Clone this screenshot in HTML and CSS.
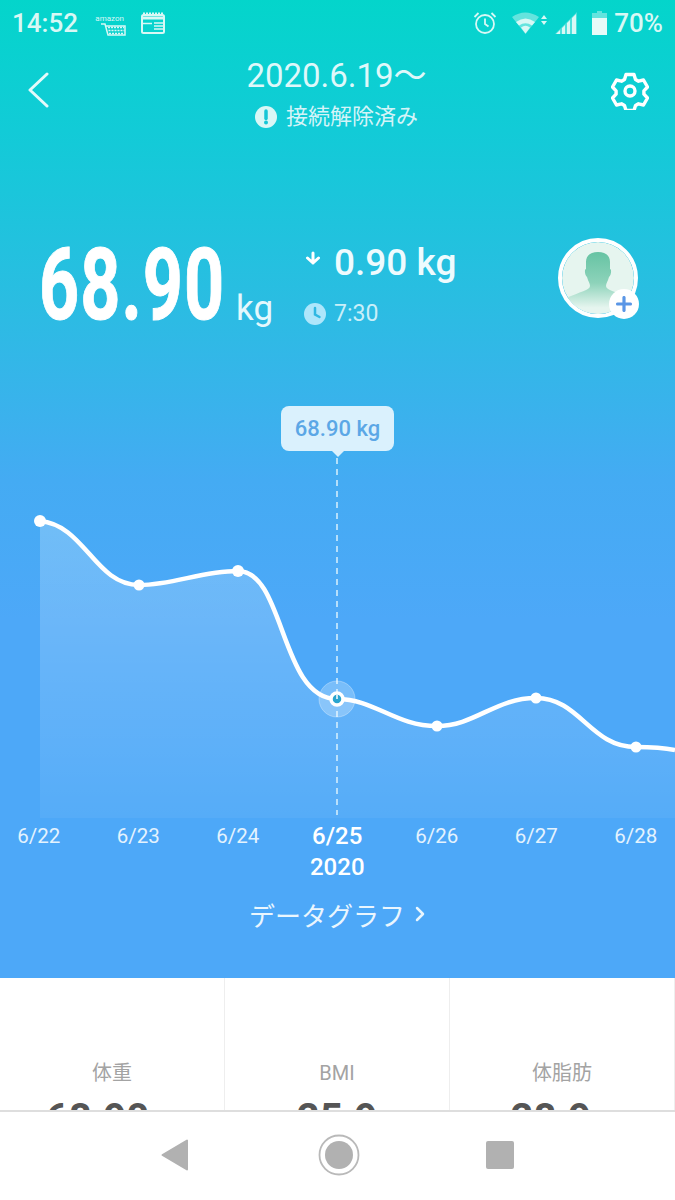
FILE: index.html
```html
<!DOCTYPE html>
<html lang="ja">

<head>
  <title>体重</title>
  <link rel="stylesheet" href="styles.css">
</head>

<body>
  <div class="phone">
    <div class="hero">
      <div class="statusbar">
        <div class="status-left">
          <span class="clock-text">14:52</span>
          <span class="amazon">
            <span class="amazon-word">amazon</span>
            <svg width="26" height="13" viewBox="0 0 26 13">
              <path d="M1 1h4l3 11h17V3H6" fill="none" stroke="#d8f8f5" stroke-width="1.5" />
              <path d="M8 4.500h16M8.500 7.500h16M9 10.500h15" stroke="#d8f8f5" stroke-width="1.500" stroke-dasharray="2 1" />
            </svg>
          </span>
          <svg class="news" width="24" height="22" viewBox="0 0 24 22">
            <rect x="1" y="3" width="22" height="18" rx="1.500" fill="none" stroke="#d8f8f5" stroke-width="2" />
            <path d="M1 6h22" stroke="#d8f8f5" stroke-width="3" />
            <path d="M2 1.500h20" stroke="#d8f8f5" stroke-width="2" stroke-dasharray="2 1" />
            <path d="M13 11h9M13 14h9M13 17h9M2 11.500h9" stroke="#d8f8f5" stroke-width="1.500" />
          </svg>
        </div>
        <div class="status-right">
          <svg width="24" height="24" viewBox="0 0 24 24" fill="none" stroke="#d8f8f5" stroke-width="1.800">
            <circle cx="12" cy="13" r="9" />
            <path d="M12 7.500V13l3.500 2.500M1.500 6l4-4M22.500 6l-4-4" />
          </svg>
          <svg class="wifi" width="35" height="24" viewBox="0 0 35 24">
            <path d="M0 6Q13-3 27 6l-13.500 17z" fill="#d8f8f5" fill-opacity=".45" />
            <path d="M4 11Q13.500 4 23 11l-3 3.500Q13.500 10 7 14.500z M9 16.500Q13.500 13 18 16.500l-4.500 6z" fill="#d8f8f5" />
            <path d="M29 8l3-4 3 4zM29 10l3 4 3-4z" fill="#d8f8f5" />
          </svg>
          <svg class="signal" width="22" height="24" viewBox="0 0 22 24">
            <path d="M0 23L22 1v22z" fill="#d8f8f5" fill-opacity=".35" />
            <path d="M1 23l4-4v4zM7 23v-6l3-3v9zM12 23V12l3-3v14zM17 23V7l4-4v20z" fill="#d8f8f5" />
          </svg>
          <svg class="battery" width="15" height="24" viewBox="0 0 15 24">
            <path d="M5 0h5v2h5v5H0V2h5z" fill="#d8f8f5" fill-opacity=".45" />
            <path d="M0 7h15v17H0z" fill="#e6fbf8" />
          </svg>
          <span class="battery-text">70%</span>
        </div>
      </div>

      <div class="topbar">
        <svg class="back" width="24" height="36" viewBox="0 0 24 36" fill="none" stroke="#e4fafa" stroke-width="3" stroke-linecap="round" stroke-linejoin="round">
          <path d="M21 2L4 18l17 16" />
        </svg>
        <div class="title-box">
          <div class="title">2020.6.19〜</div>
          <div class="conn">
            <svg width="22" height="22" viewBox="0 0 22 22">
              <circle cx="11" cy="11" r="11" fill="#d8f7f6" />
              <path d="M11 5v7.500" stroke="#15c6d6" stroke-width="3.500" stroke-linecap="round" />
              <circle cx="11" cy="16.500" r="2" fill="#15c6d6" />
            </svg>
            <span>接続解除済み</span>
          </div>
        </div>
        <svg class="gear" width="38" height="38" viewBox="0 0 38 38" fill="none" stroke="#fff" stroke-width="3.400" stroke-linejoin="round">
          <path d="M15 2.500h8l1.500 5 3 1.700 5-1.200 4 7-3.600 3.800v3.400l3.600 3.800-4 7-5-1.200-3 1.700-1.500 5h-8l-1.500-5-3-1.700-5 1.200-4-7 3.600-3.800v-3.400L1.500 15l4-7 5 1.200 3-1.700z" />
          <circle cx="19" cy="19" r="5" />
        </svg>
      </div>

      <div class="summary">
        <div class="big-value">68.90</div>
        <div class="big-unit">kg</div>
        <div class="delta">
          <div class="delta-row">
            <svg width="16" height="14" viewBox="0 0 16 14" fill="none" stroke="#fff" stroke-width="3" stroke-linecap="round" stroke-linejoin="round">
              <path d="M8 2v10M2.500 7L8 12l5.500-5" />
            </svg>
            <span class="delta-num">0.90 kg</span>
          </div>
          <div class="time-row">
            <svg width="22" height="22" viewBox="0 0 22 22">
              <circle cx="11" cy="11" r="11" fill="#aee6fb" />
              <path d="M11 5v6.500l4.500 2.500" fill="none" stroke="#2fb8e2" stroke-width="2.500" stroke-linecap="round" />
            </svg>
            <span>7:30</span>
          </div>
        </div>
        <div class="avatar">
          <svg width="72" height="72" viewBox="0 0 72 72">
            <defs>
              <linearGradient id="person" x1="0" y1="0" x2="0" y2="1">
                <stop offset="0" stop-color="#66c3a3" />
                <stop offset=".5" stop-color="#8dd3ba" />
                <stop offset=".9" stop-color="#e6f5ef" />
              </linearGradient>
            </defs>
            <circle cx="36" cy="36" r="36" fill="#e6f5ef" />
            <path d="M24 20c0-7 5-10 12-10s12 3 12 10v7c2 0 1 7-1 8-1 4-3 6-3 9 0 4 10 6 24 12v16H4V56c14-6 24-8 24-12 0-3-2-5-3-9-2-1-3-8-1-8z" fill="url(#person)" />
          </svg>
          <span class="avatar-plus">
            <svg width="16" height="16" viewBox="0 0 16 16">
              <path d="M8 1.500v13M1.500 8h13" stroke="#5a96e6" stroke-width="3.200" stroke-linecap="round" />
            </svg>
          </span>
        </div>
      </div>

      <div class="chart">
        <svg class="chart-svg" width="675" height="420" viewBox="0 400 675 420">
          <defs>
            <linearGradient id="area" x1="0" y1="0" x2="0" y2="1">
              <stop offset="0" stop-color="#fff" stop-opacity=".23" />
              <stop offset="1" stop-color="#fff" stop-opacity=".05" />
            </linearGradient>
          </defs>
          <path d="M40 521C85 525 95 585 139 585C175 585 200 571 238 571C285 571 280 699 337 699C375 699 395 726 437 726C475 726 495 698 536 698C580 698 590 747 636 747C650 747 665 748 675 750V818H40z" fill="url(#area)" />
          <path d="M337 458V815" stroke="#d9f1fd" stroke-width="1.500" stroke-dasharray="6 5" />
          <path d="M40 521C85 525 95 585 139 585C175 585 200 571 238 571C285 571 280 699 337 699C375 699 395 726 437 726C475 726 495 698 536 698C580 698 590 747 636 747C650 747 665 748 675 750" fill="none" stroke="#fff" stroke-width="4.500" />
          <g fill="#fff">
            <circle cx="40" cy="521" r="6" />
            <circle cx="139" cy="585" r="5.500" />
            <circle cx="238" cy="571" r="6" />
            <circle cx="437" cy="726" r="5.500" />
            <circle cx="536" cy="698" r="5.500" />
            <circle cx="636" cy="747" r="5.500" />
          </g>
          <circle cx="337" cy="699" r="18" fill="#fff" fill-opacity=".25" stroke="#fff" stroke-opacity=".3" />
          <circle cx="337" cy="699" r="6" fill="#2aa5cf" stroke="#fff" stroke-width="3.500" />
          <path d="M337 695v4" stroke="#fff" stroke-width="1.500" />
        </svg>
        <div class="tip">68.90 kg</div>
      </div>

      <div class="axis">
        <div class="tick">6/22</div>
        <div class="tick">6/23</div>
        <div class="tick">6/24</div>
        <div class="tick active">6/25<div class="year">2020</div></div>
        <div class="tick">6/26</div>
        <div class="tick">6/27</div>
        <div class="tick">6/28</div>
      </div>

      <div class="graph-link">データグラフ
        <svg width="11" height="16" viewBox="0 0 11 16" fill="none" stroke="#eaf6fe" stroke-width="2.500" stroke-linecap="round" stroke-linejoin="round">
          <path d="M2 2l6 6-6 6" />
        </svg>
      </div>
    </div>

    <div class="stats">
      <div class="stat">
        <div class="stat-label">体重</div>
        <div class="stat-value">68.90<span class="stat-unit">kg</span></div>
      </div>
      <div class="stat">
        <div class="stat-label">BMI</div>
        <div class="stat-value">25.9</div>
      </div>
      <div class="stat">
        <div class="stat-label">体脂肪</div>
        <div class="stat-value">28.9<span class="stat-unit">%</span></div>
      </div>
    </div>

    <div class="navbar">
      <svg class="nav-back" width="28" height="32" viewBox="0 0 28 32">
        <path d="M26 1.500v29L1.500 16z" fill="#b1b1b1" stroke="#b1b1b1" stroke-width="2" stroke-linejoin="round" />
      </svg>
      <svg width="42" height="42" viewBox="0 0 42 42">
        <circle cx="21" cy="21" r="19.500" fill="none" stroke="#b9b9b9" stroke-width="1.800" />
        <circle cx="21" cy="21" r="14" fill="#b1b1b1" />
      </svg>
      <svg width="28" height="28" viewBox="0 0 28 28">
        <rect width="28" height="28" rx="2" fill="#b1b1b1" />
      </svg>
    </div>
  </div>
</body>

</html>
```

FILE: styles.css
```css
* {
  box-sizing: border-box;
}

body {
  margin: 0;
  font-family: Roboto, "Noto Sans CJK JP", sans-serif;
  overflow: hidden;
}

.phone {
  position: relative;
  width: 675px;
  height: 1200px;
  overflow: hidden;
  background: #fff;
}

.hero {
  height: 978px;
  background: linear-gradient(#04d5cb 0, #12cbd7 130px, #2abde2 300px, #44abf3 480px, #4da8f8 620px, #4da8f8 100%);
}

.statusbar {
  display: flex;
  justify-content: space-between;
  align-items: center;
  height: 46px;
  padding: 0 12px;
  color: #d8f8f5;
}

.status-left,
.status-right {
  display: flex;
  align-items: center;
}

.clock-text {
  font-size: 26px;
  font-weight: 500;
  margin-right: 22px;
}

.amazon {
  display: flex;
  flex-direction: column;
  align-items: flex-end;
  width: 26px;
  margin-right: 15px;
  margin-top: 4px;
}

.amazon-word {
  font-size: 8px;
  line-height: 9px;
  margin-right: 2px;
}

.news {
  display: block;
}

.status-right .wifi {
  margin-left: 15px;
}

.status-right .signal {
  margin-left: 8px;
}

.status-right .battery {
  margin-left: 15px;
}

.battery-text {
  font-size: 26px;
  font-weight: 500;
  margin-left: 7px;
}

.topbar {
  display: flex;
  justify-content: space-between;
  align-items: flex-start;
  height: 94px;
  padding: 26px 26px 0;
}

.back {
  margin-right: 12px;
}

.title-box {
  text-align: center;
  margin-top: -15px;
}

.title {
  font-size: 33px;
  line-height: 38px;
  color: #def8fa;
}

.conn {
  display: flex;
  justify-content: center;
  align-items: center;
  gap: 9px;
  margin-top: 7px;
  font-size: 22px;
  line-height: 30px;
  color: #d4f4f8;
}

.summary {
  display: flex;
  align-items: flex-start;
  height: 100px;
  margin-top: 94px;
  padding-left: 39px;
}

.big-value {
  width: 197px;
  margin-top: 1px;
  font-size: 100px;
  line-height: 100px;
  font-weight: 700;
  letter-spacing: 1.500px;
  color: #fff;
  white-space: nowrap;
  transform: scaleX(.7);
  transform-origin: left;
  -webkit-text-stroke: 1px #fff;
}

.big-unit {
  width: 69px;
  margin-top: 50px;
  font-size: 35px;
  line-height: 50px;
  color: #e4f8fd;
}

.delta {
  width: 253px;
}

.delta-row {
  display: flex;
  align-items: center;
  gap: 13px;
  height: 56px;
  color: #eefbfe;
}

.delta-row svg {
  margin-bottom: 8px;
}

.delta-num {
  font-size: 37px;
  font-weight: 500;
}

.time-row {
  display: flex;
  align-items: center;
  gap: 8px;
  margin-top: 10px;
  margin-left: -1px;
  font-size: 23px;
  color: #c9eff9;
}

.avatar {
  position: relative;
  width: 80px;
  height: 80px;
  margin-top: 4px;
  border: 4px solid #fff;
  border-radius: 50%;
}

.avatar svg {
  display: block;
  border-radius: 50%;
}

.avatar-plus {
  position: absolute;
  right: -5px;
  bottom: -5px;
  display: flex;
  align-items: center;
  justify-content: center;
  width: 30px;
  height: 30px;
  border-radius: 50%;
  background: #fff;
}

.chart {
  position: relative;
  height: 420px;
  margin-top: 66px;
}

.chart-svg {
  display: block;
}

.tip {
  position: absolute;
  left: 281px;
  top: 6px;
  width: 113px;
  height: 45px;
  border-radius: 8px;
  background: #daf1fd;
  color: #5ba7e6;
  font-size: 22px;
  font-weight: 500;
  line-height: 45px;
  text-align: center;
}

.tip::after {
  content: "";
  position: absolute;
  left: 50%;
  top: 100%;
  margin-left: -6px;
  border: 6px solid transparent;
  border-top-color: #daf1fd;
  border-bottom: 0;
}

.axis {
  display: grid;
  grid-template-columns: repeat(7, 99.500px);
  margin-left: -11px;
  padding-top: 2px;
}

.tick {
  font-size: 20.500px;
  line-height: 28px;
  text-align: center;
  color: #e4f3fe;
}

.tick.active {
  font-size: 24px;
  font-weight: 500;
  color: #fff;
}

.year {
  margin-top: 3px;
}

.graph-link {
  display: flex;
  justify-content: center;
  align-items: center;
  gap: 10px;
  height: 40px;
  margin-top: 13px;
  font-size: 26px;
  color: #eaf6fe;
}

.stats {
  display: grid;
  grid-template-columns: repeat(3, 225px);
  height: 140px;
}

.stat {
  padding-top: 81px;
  border-right: 1px solid #eeeeee;
  text-align: center;
}

.stat-label {
  font-size: 20px;
  line-height: 28px;
  color: #a3a3a3;
}

.stat-value {
  margin-top: 10px;
  font-size: 40px;
  line-height: 44px;
  font-weight: 700;
  color: #555;
}

.stat-unit {
  margin-left: 8px;
  font-size: 20px;
  font-weight: 400;
}

.navbar {
  position: absolute;
  left: 0;
  bottom: 0;
  display: flex;
  justify-content: center;
  align-items: center;
  gap: 126px;
  width: 100%;
  height: 90px;
  padding: 0 1px 2px 0;
  border-top: 2px solid #dedede;
  background: #fff;
}

.nav-back {
  margin-right: 3px;
}
```
